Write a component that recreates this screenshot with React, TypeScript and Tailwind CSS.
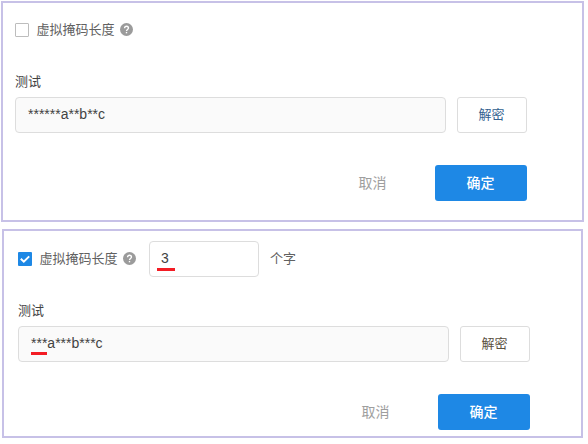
interface MaskFormProps {
	className: string;
	checked?: boolean;
	length?: string;
	value: string;
	underline?: boolean;
	testColor: string;
}

const HelpIcon = () => (
	<svg className="mb-px ml-[5px] size-[13px] shrink-0" viewBox="0 0 13 13">
		<circle cx="6.5" cy="6.5" r="6.5" fill="#9b9b9b" />
		<path d="M4.6 5.2c0-1.3.8-2 1.95-2s1.9.7 1.9 1.8c0 1.5-1.9 1.5-1.9 3" fill="none" stroke="#fff" strokeWidth="1.4" />
		<path d="M5.8 8.9h1.4v1.4H5.8z" fill="#fff" />
	</svg>
);

const Checkbox = ({ checked }: { checked?: boolean }) =>
	checked ? (
		<span className="flex size-[14px] shrink-0 items-center justify-center rounded-[1px] bg-[#1e88e5]">
			<svg className="size-[14px]" viewBox="0 0 14 14" fill="none" stroke="#fff" strokeWidth="2">
				<path d="M2.8 6.8l3 2.9 5.4-5.3" />
			</svg>
		</span>
	) : (
		<span className="size-[14px] shrink-0 rounded-[1px] border border-[#bdbdbd] bg-white" />
	);

const MaskForm = ({ className, checked, length, value, underline, testColor }: MaskFormProps) => (
	<section className={`border-2 border-[#c7c1e7] bg-white ${className}`}>
		<div className="w-[512px]">
			<div className="flex h-9 items-center">
				<Checkbox checked={checked} />
				<span className="ml-[7.5px] text-[13px] text-[#616161]">虚拟掩码长度</span>
				<HelpIcon />

				{length && (
					<>
						<div className="relative ml-[13.5px] h-9 w-[110px] rounded-[4px] border border-[#dddddd] pr-3 pl-[11px] leading-8">
							{length}
							<span className="absolute top-[26px] left-[7px] h-[3px] w-[18px] bg-[#f31c24]" />
						</div>
						<span className="ml-[11px] text-[13px] text-[#616161]">个字</span>
					</>
				)}
			</div>

			<div className="mt-6 mb-[5px] h-5 text-[13px] leading-5">测试</div>

			<div className="flex justify-between">
				<div className="relative h-9 w-[431px] rounded-[4px] border border-[#dddddd] bg-[#fafafa] px-3 leading-8">
					{value}
					{underline && <span className="absolute top-[25px] left-3 h-[3px] w-4 bg-[#f31c24]" />}
				</div>
				<button className={`h-9 w-[70px] rounded-[3px] border border-[#dddddd] pr-px text-[13px] ${testColor}`}>解密</button>
			</div>

			<div className="mt-8 flex justify-end">
				<button className="mr-[48.5px] h-9 text-sm text-[#9e9e9e]">取消</button>
				<button className="h-9 w-[92px] rounded-[3px] bg-[#1e88e5] pr-px text-sm font-medium text-white">确定</button>
			</div>
		</div>
	</section>
);

const App = () => {
	return (
		<main className="h-[444px] w-[588px] bg-white pt-px font-['Liberation_Sans','Noto_Sans_CJK_SC',sans-serif] text-sm text-[#424242]">
			<MaskForm
				className="ml-px h-[221px] w-[583px] pt-[9px] pl-3"
				value="******a**b**c"
				testColor="text-[#32618f]"
			/>
			<MaskForm
				className="mt-[7px] ml-0.5 h-[209px] w-[581px] pt-2.5 pl-3.5"
				checked
				length="3"
				value="***a***b***c"
				underline
				testColor="text-[#5a4f40]"
			/>
		</main>
	);
};

export default App;
